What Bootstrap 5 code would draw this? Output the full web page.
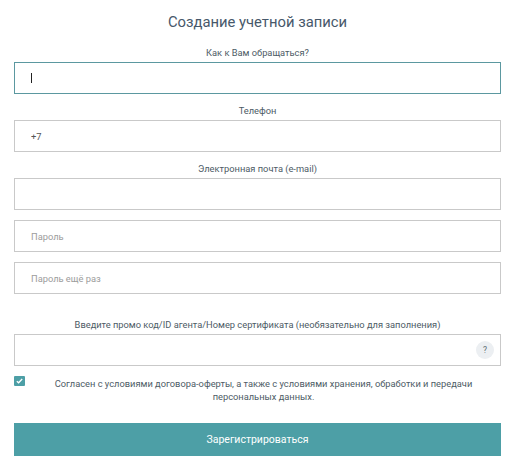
<!DOCTYPE html>
<html lang="ru">
<head>
<meta charset="utf-8">
<title>Регистрация</title>
<link href="https://cdn.jsdelivr.net/npm/bootstrap@5.3.0/dist/css/bootstrap.min.css" rel="stylesheet">
<style>
html,body{background:#fff;overflow:hidden}
body{font-family:Roboto,"Liberation Sans",sans-serif;color:#3d4f5c}
.reg-wrap{padding:13px 11px 0 14px;width:512px}
.reg-title{font-size:14.8px;line-height:19px;font-weight:400;margin:0 0 15px;text-align:center;color:#47586a}
.reg-label{display:block;font-size:9.3px;line-height:12px;margin:0 0 3px;text-align:center;color:#4d5b65}
.reg-input.form-control{height:32px;border:1px solid #c9c9c9;border-radius:0;padding:0 16px;font-size:9.3px;color:#555;box-shadow:none}
.reg-input.form-control::placeholder{color:#9c9c9c;opacity:1}
.reg-input.is-active,.reg-input.form-control:focus{border-color:#5b98a0}
.field-gap{margin-bottom:10px}
.field-gap-lg{margin-bottom:11px}
.field-gap-xl{margin-bottom:25px}
.caret-mark{position:absolute;left:17px;top:11px;width:1px;height:10px;background:#222}
.hint-btn{position:absolute;right:7px;top:7px;width:18px;height:18px;border-radius:50%;background:#eceff2;color:#5e6a72;border:0;padding:0;font-size:8.5px;line-height:18px;text-align:center}
.agree-box{flex:0 0 11px;width:11px;height:10px;background:#4d9fa6;border-radius:1px;display:flex;align-items:center;justify-content:center}
.agree-text{flex:1;font-size:9.3px;line-height:13px;text-align:center;color:#4d5b65;padding:1px 0 0 1px}
.reg-btn.btn{display:block;width:100%;height:33px;border:0;border-radius:0;background:#4d9fa6;color:#fff;font-size:10.5px;line-height:33px;padding:0;margin-top:20px}
</style>
</head>
<body>
<form class="reg-wrap">
  <h1 class="reg-title">Создание учетной записи</h1>

  <label class="reg-label" for="f1">Как к Вам обращаться?</label>
  <div class="position-relative field-gap-lg">
    <input id="f1" class="form-control reg-input is-active" type="text">
    <span class="caret-mark"></span>
  </div>

  <label class="reg-label" for="f2">Телефон</label>
  <div class="field-gap-lg"><input id="f2" class="form-control reg-input" type="text" value="+7"></div>

  <label class="reg-label" for="f3">Электронная почта (e-mail)</label>
  <div class="field-gap"><input id="f3" class="form-control reg-input" type="email"></div>

  <div class="field-gap"><input class="form-control reg-input" type="text" placeholder="Пароль"></div>
  <div class="field-gap-xl"><input class="form-control reg-input" type="text" placeholder="Пароль ещё раз"></div>

  <label class="reg-label" for="f6">Введите промо код/ID агента/Номер сертификата (необязательно для заполнения)</label>
  <div class="position-relative field-gap">
    <input id="f6" class="form-control reg-input" type="text">
    <button type="button" class="hint-btn">?</button>
  </div>

  <div class="d-flex align-items-start">
    <span class="agree-box">
      <svg width="7" height="6" viewBox="0 0 7 6"><path d="M.8 3.2 2.6 4.8 6.2 1" fill="none" stroke="#fff" stroke-width="1.3"/></svg>
    </span>
    <div class="agree-text">Согласен с условиями договора-оферты, а также с условиями хранения, обработки и передачи персональных данных.</div>
  </div>

  <button type="button" class="btn reg-btn">Зарегистрироваться</button>
</form>
<script src="https://cdn.jsdelivr.net/npm/bootstrap@5.3.0/dist/js/bootstrap.bundle.min.js"></script>
</body>
</html>
